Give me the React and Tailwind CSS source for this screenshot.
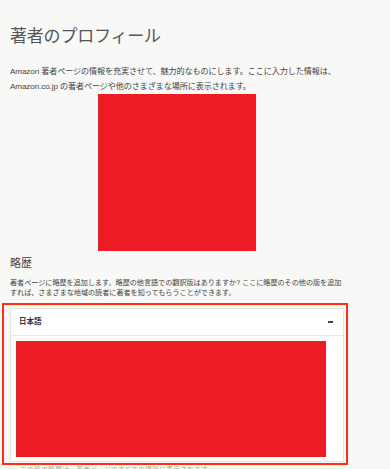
import React from 'react';

const jp = { fontFamily: '"Liberation Sans", "Noto Sans CJK JP", sans-serif' };

function BioCard() {
  return (
    <div className="ml-[2px] w-[346px] h-[162px] border-2 border-[#ff2d12] pl-[6px] pt-[3px]">
      <div className="w-[334px] h-[154px] bg-white border border-[#e4e4e4]">
        <div className="h-[27px] flex items-center justify-between pl-[8px] pr-[10px] border-b border-[#e8e8e8]">
          <span className="text-[7.5px] font-bold text-[#333]">日本語</span>
          <span className="block w-[5px] h-[2px] bg-[#444]"></span>
        </div>
        <div className="pl-[5px] pt-[5px]">
          <div className="w-[310px] h-[116px] bg-[#ed1c24]"></div>
        </div>
      </div>
    </div>
  );
}

export default function App() {
  return (
    <div className="w-[390px] h-[469px] overflow-hidden bg-[#f8f8f6]" style={jp}>
      <div className="pt-[26px] px-[10px]">
        <h1 className="text-[17px] leading-[22px] text-[#555] tracking-[-0.2px]">著者のプロフィール</h1>
        <p className="mt-[17px] text-[8.1px] leading-[14.5px] text-[#444] tracking-[-0.1px]">
          Amazon 著者ページの情報を充実させて、魅力的なものにします。ここに入力した情報は、
          <br />
          Amazon.co.jp の著者ページや他のさまざまな場所に表示されます。
        </p>
      </div>
      <div className="ml-[98px] w-[158px] h-[157px] bg-[#ed1c24]"></div>
      <div className="px-[10px]">
        <h2 className="mt-[5px] text-[11px] leading-[14px] text-[#444]">略歴</h2>
        <p className="mt-[8px] text-[7.1px] leading-[10px] text-[#444] whitespace-nowrap">
          著者ページに略歴を追加します。略歴の他言語での翻訳版はありますか? ここに略歴のその他の版を追加
          <br />
          すれば、さまざまな地域の読者に著者を知ってもらうことができます。
        </p>
      </div>
      <div className="mt-[5px]">
        <BioCard />
      </div>
      <p className="pl-[20px] text-[7px] leading-[10px] text-[#aaa]">
        この版の略歴は、著者ページのすべての場所に表示されます。
      </p>
    </div>
  );
}
